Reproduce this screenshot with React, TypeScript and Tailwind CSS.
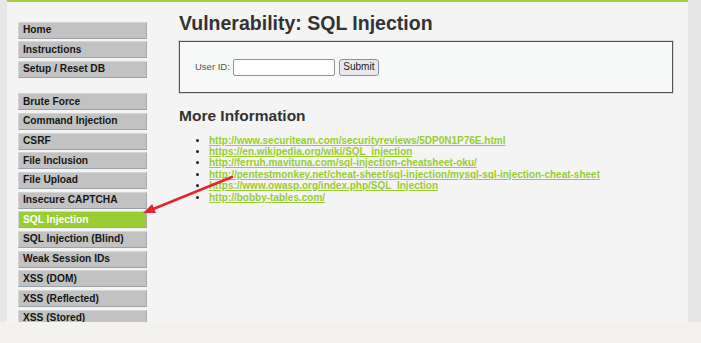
import React from 'react';

const menuTop = ['Home', 'Instructions', 'Setup / Reset DB'];
const menuVulns = [
  'Brute Force',
  'Command Injection',
  'CSRF',
  'File Inclusion',
  'File Upload',
  'Insecure CAPTCHA',
  'SQL Injection',
  'SQL Injection (Blind)',
  'Weak Session IDs',
  'XSS (DOM)',
  'XSS (Reflected)',
  'XSS (Stored)',
];

const links = [
  'http://www.securiteam.com/securityreviews/5DP0N1P76E.html',
  'https://en.wikipedia.org/wiki/SQL_injection',
  'http://ferruh.mavituna.com/sql-injection-cheatsheet-oku/',
  'http://pentestmonkey.net/cheat-sheet/sql-injection/mysql-sql-injection-cheat-sheet',
  'https://www.owasp.org/index.php/SQL_Injection',
  'http://bobby-tables.com/',
];

const MenuItem = ({ label, active }: { label: string; active?: boolean }) => (
  <div
    className={`h-[17px] mb-[2.7px] pl-[4px] flex items-center text-[10.2px] font-bold leading-none border border-[#d4d4d4] border-b-[#9ca2aa] border-r-[#a8acb2] ${
      active ? 'bg-[#9acd32] text-white' : 'bg-[#c2c2c2] text-[#161616]'
    }`}
  >
    {label}
  </div>
);

export default function App() {
  return (
    <div
      className="relative w-[701px] h-[343px] flex flex-col overflow-hidden bg-[#f3f2ef]"
      style={{ fontFamily: '"Liberation Sans", Arial, sans-serif' }}
    >
      <div className="flex h-[322px] shrink-0">
        <div className="w-[7px] bg-[#e7e7e7]" />
        <div className="w-[681px] bg-[#f4f4f4] border-t-2 border-[#a6d13f] flex overflow-hidden">
          {/* Sidebar menu */}
          <div className="w-[140px] pl-[11px] pt-[19.5px] shrink-0">
            {menuTop.map((m) => (
              <MenuItem key={m} label={m} />
            ))}
            <div className="h-[12.7px]" />
            {menuVulns.map((m) => (
              <MenuItem key={m} label={m} active={m === 'SQL Injection'} />
            ))}
          </div>

          {/* Main body */}
          <div className="ml-[32px] w-[494px] pt-[8.5px] text-[#333]">
            <h1 className="text-[19.5px] leading-[24px] font-bold text-[#333]">Vulnerability: SQL Injection</h1>

            <div className="mt-[6.5px] h-[52px] border border-[#555] bg-[#f7f8f8] shadow-[0_0_0_1px_#d8d8d8] flex items-center px-[15px]">
              <span className="text-[9.5px] text-[#555]">User ID:</span>
              <input
                type="text"
                className="ml-[3.5px] w-[102px] h-[17px] bg-white border border-[#8f8f9d] rounded-[2px] outline-none"
              />
              <button className="ml-[3.5px] w-[40px] h-[17px] bg-[#e9e9ed] border border-[#8f8f9d] rounded-[3px] text-[10px] text-[#222] leading-none">
                Submit
              </button>
            </div>

            <h2 className="mt-[13px] text-[15.5px] leading-[20px] font-bold text-[#333]">More Information</h2>
            <ul className="mt-[8.5px] pl-[30px] list-disc text-[10px] leading-[11.4px] font-bold text-[#222]">
              {links.map((l) => (
                <li key={l}>
                  <a href="#" className="text-[#99cc33] underline whitespace-nowrap">
                    {l}
                  </a>
                </li>
              ))}
            </ul>
          </div>
        </div>
        <div className="w-[13px] bg-[#e7e7e7]" />
      </div>

      {/* Annotation arrow */}
      <svg className="absolute left-0 top-0 pointer-events-none" width="701" height="343" viewBox="0 0 701 343">
        <line x1="232" y1="177" x2="152" y2="209.5" stroke="#e3262b" strokeWidth="2.5" strokeLinecap="round" />
        <polygon points="143,213 156,213.1 152.2,203.9" fill="#e3262b" />
      </svg>
    </div>
  );
}
